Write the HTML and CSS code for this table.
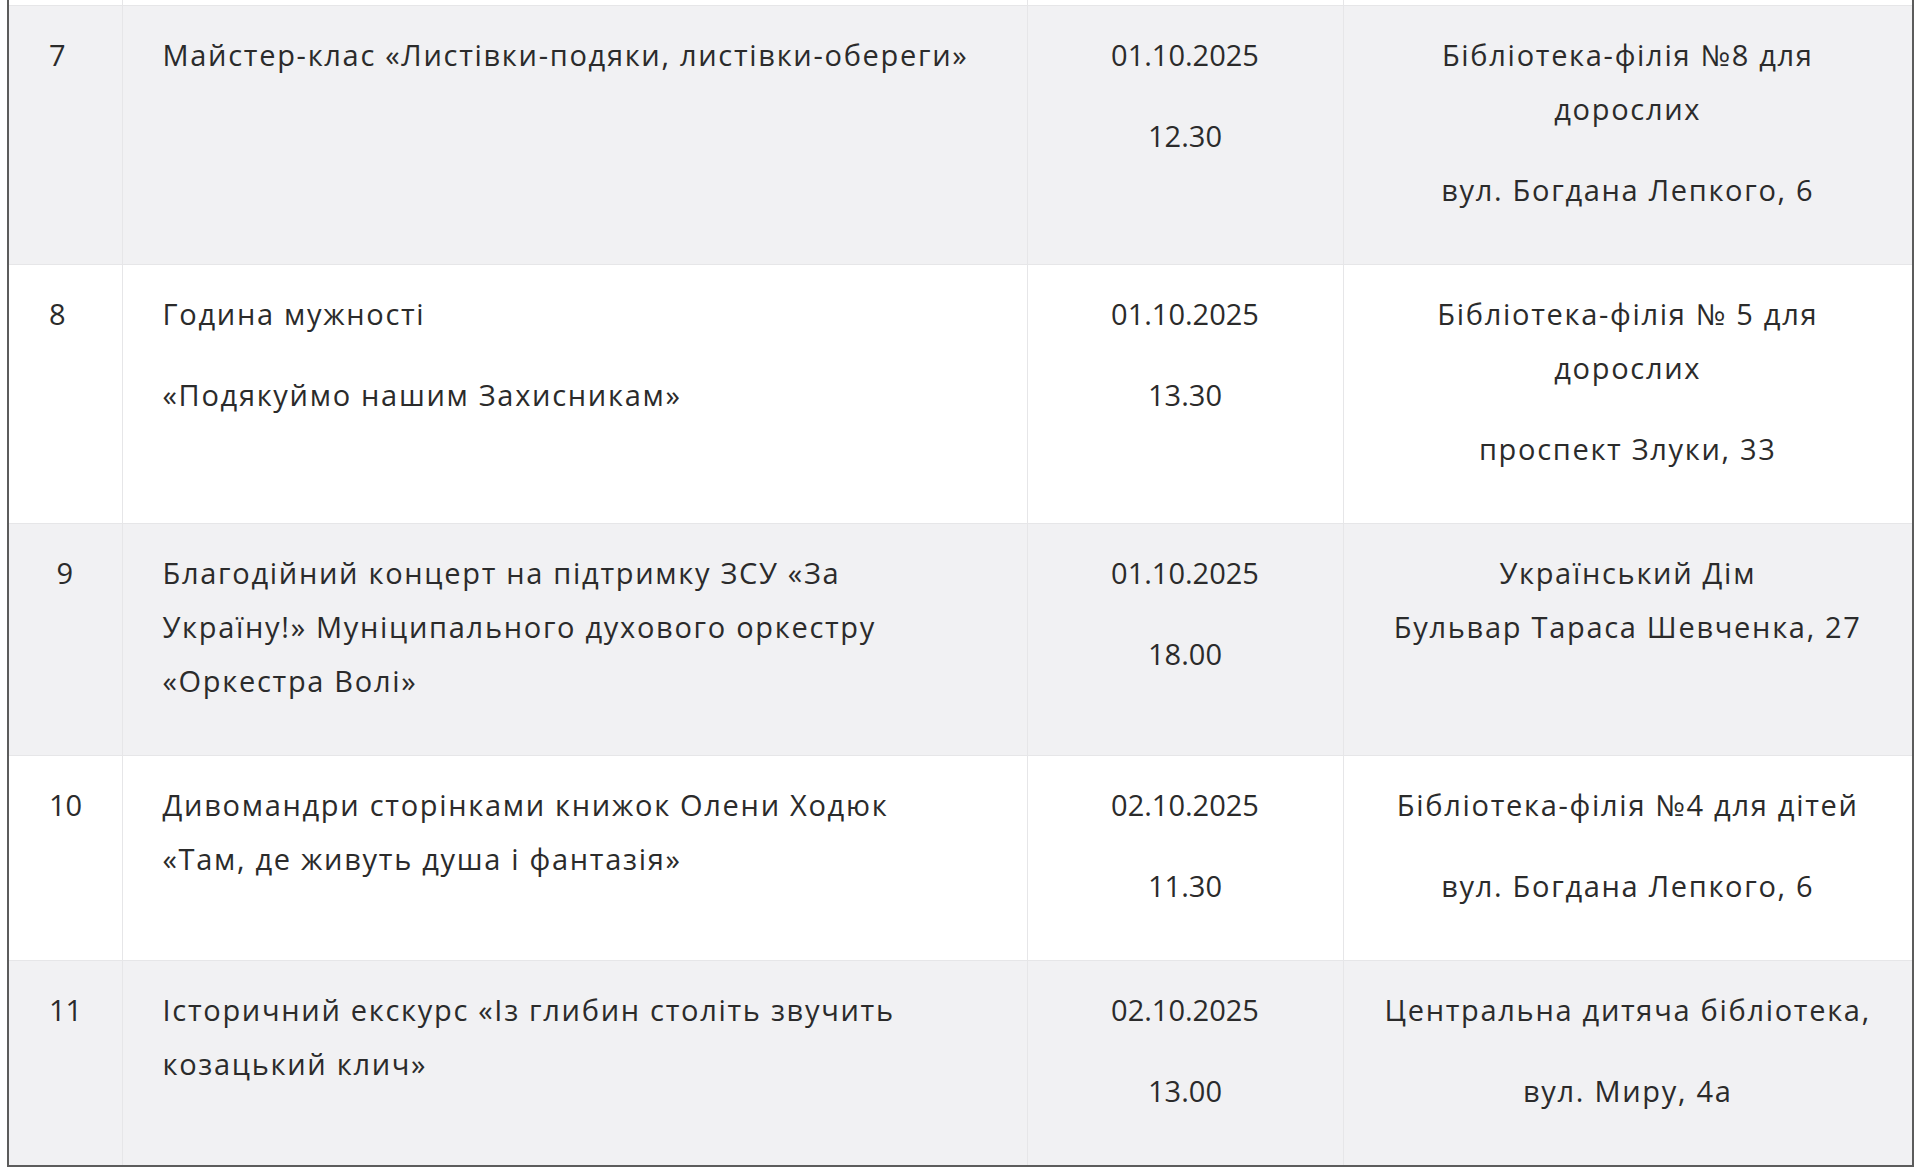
FILE: index.html
```html
<!DOCTYPE html>
<html lang="uk">
<head>
<meta charset="utf-8">
<title>План заходів</title>
<link rel="stylesheet" href="styles.css">
</head>
<body>
<div class="wrap">
<table class="events">
<colgroup>
<col class="c-num">
<col class="c-title">
<col class="c-date">
<col class="c-place">
</colgroup>
<tbody>
<tr class="tail"><td></td><td></td><td></td><td></td></tr>
<tr class="odd">
<td class="num"><p>7</p></td>
<td class="title"><p>Майстер-клас «Листівки-подяки, листівки-обереги»</p></td>
<td class="date"><p>01.10.2025</p><p>12.30</p></td>
<td class="place"><p>Бібліотека-філія №8 для<br>дорослих</p><p>вул. Богдана Лепкого, 6</p></td>
</tr>
<tr class="even">
<td class="num"><p>8</p></td>
<td class="title"><p>Година мужності</p><p>«Подякуймо нашим Захисникам»</p></td>
<td class="date"><p>01.10.2025</p><p>13.30</p></td>
<td class="place"><p>Бібліотека-філія № 5 для<br>дорослих</p><p>проспект Злуки, 33</p></td>
</tr>
<tr class="odd">
<td class="num"><p>&nbsp;9</p></td>
<td class="title"><p>Благодійний концерт на підтримку ЗСУ «За<br>Україну!» Муніципального духового оркестру<br>«Оркестра Волі»</p></td>
<td class="date"><p>01.10.2025</p><p>18.00</p></td>
<td class="place"><p>Український Дім<br>Бульвар Тараса Шевченка, 27</p></td>
</tr>
<tr class="even">
<td class="num"><p>10</p></td>
<td class="title"><p>Дивомандри сторінками книжок Олени Ходюк<br>«Там, де живуть душа і фантазія»</p></td>
<td class="date"><p>02.10.2025</p><p>11.30</p></td>
<td class="place"><p>Бібліотека-філія №4 для дітей</p><p>вул. Богдана Лепкого, 6</p></td>
</tr>
<tr class="odd">
<td class="num"><p>11</p></td>
<td class="title"><p>Історичний екскурс «Із глибин століть звучить<br>козацький клич»</p></td>
<td class="date"><p>02.10.2025</p><p>13.00</p></td>
<td class="place"><p>Центральна дитяча бібліотека,</p><p>вул. Миру, 4а</p></td>
</tr>
</tbody>
</table>
</div>
</body>
</html>
```

FILE: styles.css
```css
html, body {
  margin: 0;
  padding: 0;
  background: #ffffff;
}

.wrap {
  padding: 0 8px 0 7px;
}

.events {
  width: 1905px;
  table-layout: fixed;
  border-collapse: collapse;
  border: 2px solid #5c5c5c;
  border-top: none;
  font-family: "Open Sans", "Noto Sans", sans-serif;
  font-size: 29px;
  line-height: 54px;
  color: #2b2b2b;
}

.c-num { width: 114px; }
.c-title { width: 905px; }
.c-date { width: 316px; }
.c-place { width: 570px; }

.events td {
  vertical-align: top;
  padding: 22px 40px 20px 40px;
  border-left: 1px solid #e6e6e8;
  border-top: 1px solid #e6e6e8;
  white-space: nowrap;
}

.events td:first-child {
  border-left: none;
  padding-left: 40px;
  padding-right: 10px;
}

.events p {
  margin: 0 0 27px 0;
}

.events .title,
.events .place {
  letter-spacing: 1.7px;
}

.events .date,
.events .place {
  text-align: center;
  padding-left: 10px;
  padding-right: 10px;
}

.events .tail td {
  height: 5px;
  padding: 0;
  border-top: none;
}

.odd td {
  background: #f1f1f3;
}

.even td,
.tail td {
  background: #ffffff;
}
```
